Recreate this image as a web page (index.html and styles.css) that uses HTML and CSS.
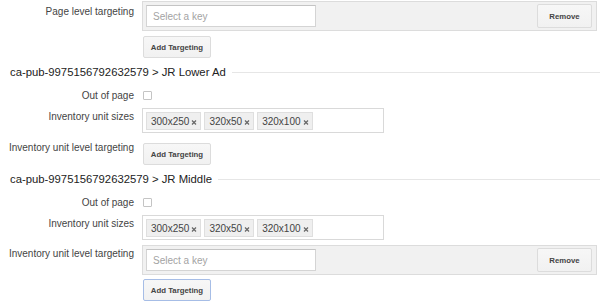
FILE: index.html
```html
<!DOCTYPE html>
<html lang="en">
<head>
    <meta charset="UTF-8">
    <meta name="viewport" content="width=device-width, initial-scale=1.0">
    <title>Inventory targeting</title>
    <link rel="stylesheet" href="styles.css">
</head>
<body>

    <div class="page">
        <div class="row">
            <div class="label">Page level targeting</div>
            <div class="control">
                <div class="targeting">
                    <input class="key-input" type="text" placeholder="Select a key">
                    <button class="btn remove">Remove</button>
                </div>
                <button class="btn add add-first">Add Targeting</button>
            </div>
        </div>

        <!-- first ad unit -->
        <div class="unit">
            <div class="unit-title"><span>ca-pub-9975156792632579 &gt; JR Lower Ad</span></div>

            <div class="row row-check">
                <div class="label">Out of page</div>
                <div class="control"><input class="check" type="checkbox"></div>
            </div>

            <div class="row">
                <div class="label">Inventory unit sizes</div>
                <div class="control">
                    <div class="sizes">
                        <span class="chip">300x250 <svg class="chip-x" viewBox="0 0 6 6"><path d="M1 1.5 L5 5.5 M5 1.5 L1 5.5"/></svg></span>
                        <span class="chip">320x50 <svg class="chip-x" viewBox="0 0 6 6"><path d="M1 1.5 L5 5.5 M5 1.5 L1 5.5"/></svg></span>
                        <span class="chip">320x100 <svg class="chip-x" viewBox="0 0 6 6"><path d="M1 1.5 L5 5.5 M5 1.5 L1 5.5"/></svg></span>
                    </div>
                </div>
            </div>

            <div class="row row-loose">
                <div class="label">Inventory unit level targeting</div>
                <div class="control">
                    <button class="btn add add-alone">Add Targeting</button>
                </div>
            </div>
        </div>

        <!-- second ad unit -->
        <div class="unit">
            <div class="unit-title"><span>ca-pub-9975156792632579 &gt; JR Middle</span></div>

            <div class="row row-check">
                <div class="label">Out of page</div>
                <div class="control"><input class="check" type="checkbox"></div>
            </div>

            <div class="row">
                <div class="label">Inventory unit sizes</div>
                <div class="control">
                    <div class="sizes">
                        <span class="chip">300x250 <svg class="chip-x" viewBox="0 0 6 6"><path d="M1 1.5 L5 5.5 M5 1.5 L1 5.5"/></svg></span>
                        <span class="chip">320x50 <svg class="chip-x" viewBox="0 0 6 6"><path d="M1 1.5 L5 5.5 M5 1.5 L1 5.5"/></svg></span>
                        <span class="chip">320x100 <svg class="chip-x" viewBox="0 0 6 6"><path d="M1 1.5 L5 5.5 M5 1.5 L1 5.5"/></svg></span>
                    </div>
                </div>
            </div>

            <div class="row row-tight">
                <div class="label">Inventory unit level targeting</div>
                <div class="control">
                    <div class="targeting">
                        <input class="key-input" type="text" placeholder="Select a key">
                        <button class="btn remove">Remove</button>
                    </div>
                    <button class="btn add focused">Add Targeting</button>
                </div>
            </div>
        </div>
    </div>

</body>
</html>
```

FILE: styles.css
```css
* {
    box-sizing: border-box;
}

body {
    margin: 0;
    background: white;
    font-family: "Liberation Sans", Arial, sans-serif;
    color: #333;
    overflow: hidden;
}

.page {
    width: 600px;
    padding-top: 1px;
}

.row {
    display: flex;
    align-items: flex-start;
    margin-top: 6px;
}

.page > .row:first-child {
    margin-top: 0;
}

.row-check {
    margin-top: 9px;
    align-items: center;
}

.row-loose {
    margin-top: 10px;
}

.row-tight {
    margin-top: 5px;
}

.label {
    width: 134px;
    flex-shrink: 0;
    text-align: right;
    font-size: 10px;
    line-height: 13px;
    padding-top: 2px;
    color: #444;
    white-space: nowrap;
}

.page > .row:first-child .label {
    padding-top: 4px;
}

.row-check .label {
    padding-top: 0;
}

.row-loose .label {
    padding-top: 0;
    margin-top: -2px;
}

.control {
    flex: 1;
    margin-left: 8px;
    padding-right: 3px;
}

/* key / value targeting box */
.targeting {
    display: flex;
    align-items: center;
    justify-content: space-between;
    background: #f1f1f1;
    border: 1px solid #dcdcdc;
    padding: 2px 4px 2px 3px;
}

.key-input {
    width: 170px;
    height: 22px;
    border: 1px solid #d4d4d4;
    border-top-color: #c4c4c4;
    padding: 0 6px;
    font-family: inherit;
    font-size: 10px;
    color: #333;
    background: white;
    outline: none;
}

.key-input::placeholder {
    color: #a3a3a3;
}

.btn {
    font-family: inherit;
    font-weight: bold;
    font-size: 7.8px;
    color: #444;
    background: linear-gradient(#f7f7f7, #f1f1f1);
    border: 1px solid #dcdcdc;
    border-radius: 2px;
    padding: 0;
    cursor: pointer;
}

.remove {
    width: 55px;
    height: 24px;
}

.add {
    display: block;
    width: 68px;
    height: 22px;
    margin-top: 4px;
    margin-left: 1px;
}

.add-first {
    margin-top: 5px;
}

.add-alone {
    margin-top: 0;
}

.add.focused {
    border-color: #a6bde6;
}

/* ad unit section */
.unit-title {
    display: flex;
    align-items: center;
    gap: 6px;
    margin-top: 7px;
    padding-left: 10px;
    font-size: 11.3px;
    line-height: 15px;
    color: #222;
}

.unit-title::after {
    content: "";
    flex: 1;
    height: 1px;
    background: #e6e6e6;
    margin-top: -1px;
}

.check {
    appearance: none;
    -webkit-appearance: none;
    width: 9px;
    height: 9px;
    margin: 0 0 0 1px;
    border: 1px solid #c4c4c4;
    border-radius: 1px;
    background: white;
    display: block;
}

.sizes {
    width: 242px;
    height: 25px;
    border: 1px solid #d9d9d9;
    background: white;
    padding: 3px 3px 2px;
    display: flex;
    gap: 3px;
}

.chip {
    display: inline-flex;
    align-items: center;
    height: 18px;
    padding: 0 3px 0 4px;
    background: #efefef;
    border: 1px solid #dfdfdf;
    font-size: 10px;
    color: #444;
    white-space: nowrap;
}

.chip-x {
    width: 6px;
    height: 6px;
    margin-left: 2px;
    margin-top: 2px;
    fill: none;
    stroke: #666;
    stroke-width: 1.2;
}
```
